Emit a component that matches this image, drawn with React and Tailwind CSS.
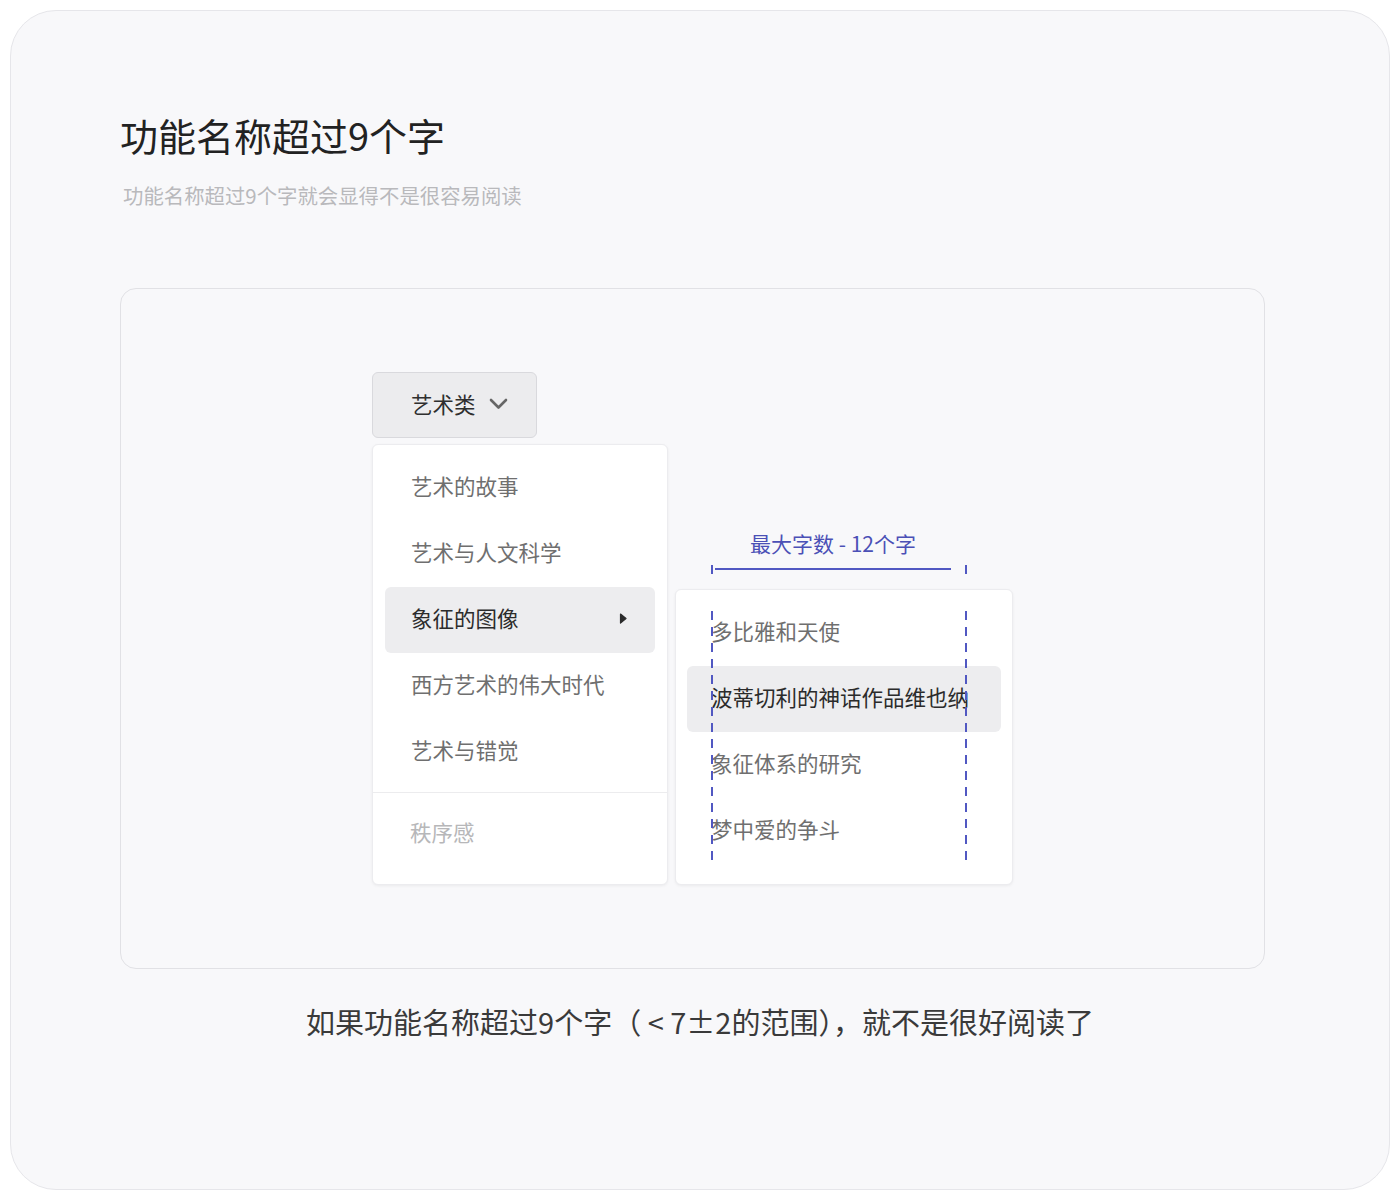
const firstMenu = ["艺术的故事", "艺术与人文科学", "象征的图像", "西方艺术的伟大时代", "艺术与错觉"];
const subMenu = ["多比雅和天使", "波蒂切利的神话作品维也纳", "象征体系的研究", "梦中爱的争斗"];

function DashedLine({ className, height }) {
  return (
    <svg className={className} width="4" height={height} viewBox={`0 0 4 ${height}`}>
      <line x1="2" y1="0" x2="2" y2={height} stroke="#5158c2" strokeWidth="2" strokeDasharray="9 7" />
    </svg>
  );
}

function MenuItem({ label, active, hasChildren }) {
  return (
    <div
      className={
        "flex h-[66px] items-center justify-between rounded-md pb-[3px] pl-[26px] pr-[28px] text-[21.5px] " +
        (active ? "bg-[#ededef] text-[#2b2b2b]" : "text-[#6f6f6f]")
      }
    >
      <span>{label}</span>
      {hasChildren && (
        <svg width="8" height="11" viewBox="0 0 8 11">
          <path d="M1.5 1 L7 5.5 L1.5 10 Z" fill="#2b2b2b" stroke="#2b2b2b" strokeLinejoin="round" strokeWidth="1.2" />
        </svg>
      )}
    </div>
  );
}

export default function App() {
  return (
    <div
      className="min-h-[1200px] bg-white p-[10px]"
      style={{ fontFamily: '"Noto Sans CJK SC", "Noto Sans", sans-serif' }}
    >
      <div className="flex h-[1180px] flex-col rounded-[46px] border border-[#e6e6ea] bg-[#f8f8fa] pl-[109px] pt-[101px]">
        <h1 className="text-[38px] leading-[46px] font-normal text-[#222222]">功能名称超过9个字</h1>
        <p className="mt-[23px] pl-[3px] text-[20.4px] leading-[28px] text-[#b9b9bc]">
          功能名称超过9个字就会显得不是很容易阅读
        </p>

        <div className="mt-[79px] h-[681px] w-[1145px] rounded-[16px] border border-[#e1e1e5] pl-[251px] pt-[83px]">
          <div className="flex items-start">
            <div className="flex flex-col">
              <button className="flex h-[66px] w-[165px] items-center rounded-md border border-[#d9d9dd] bg-[#ececee] pb-[2px] pl-[38px] text-[21.5px] text-[#2f2f2f]">
                <span>艺术类</span>
                <svg className="ml-[13px]" width="19" height="12" viewBox="0 0 19 12">
                  <polyline points="2,2 9.5,9.5 17,2" fill="none" stroke="#666666" strokeWidth="2.6" strokeLinecap="round" strokeLinejoin="round" />
                </svg>
              </button>

              <div className="mt-[6px] w-[296px] rounded-md border border-[#ececef] bg-white px-[12px] pt-[10px] pb-[17px] shadow-[0_1px_3px_rgba(0,0,0,0.06)]">
                {firstMenu.map((item, i) => (
                  <MenuItem key={item} label={item} active={i === 2} hasChildren={i === 2} />
                ))}
                <div className="-mx-[12px] mt-[7px] border-t border-[#ececee]" />
                <div className="mt-[8px] flex h-[66px] items-center pb-[3px] pl-[25px] text-[21.5px] text-[#b7b7b9]">秩序感</div>
              </div>
            </div>

            <div className="mt-[158px] ml-[7px] flex flex-col">
              <div className="relative h-[59px] w-[338px]">
                <div className="absolute left-[30px] -top-[1px] w-[256px] text-center text-[21px] leading-[28px] text-[#4b50b6]">
                  最大字数&nbsp;-&nbsp;12个字
                </div>
                <DashedLine className="absolute left-[35px] top-[35px]" height={10} />
                <DashedLine className="absolute left-[289px] top-[35px]" height={10} />
                <div className="absolute left-[40px] top-[38px] h-[2px] w-[236px] bg-[#5158c2]" />
              </div>

              <div className="relative w-[338px] rounded-md border border-[#ececef] bg-white px-[11px] pt-[10px] pb-[20px] shadow-[0_1px_3px_rgba(0,0,0,0.06)]">
                {subMenu.map((item, i) => (
                  <div
                    key={item}
                    className={
                      "flex h-[66px] items-center rounded-md pb-[3px] pl-[24px] text-[21.5px] " +
                      (i === 1 ? "bg-[#ededef] text-[#2b2b2b]" : "text-[#6f6f6f]")
                    }
                  >
                    {item}
                  </div>
                ))}
                <DashedLine className="absolute left-[34px] top-[21px]" height={250} />
                <DashedLine className="absolute left-[288px] top-[21px]" height={250} />
              </div>
            </div>
          </div>
        </div>

        <p className="-ml-[109px] mt-[32px] w-[1378px] text-center text-[29px] leading-[40px] text-[#3a3a3a]">
          如果功能名称超过9个字（ &lt; 7±2的范围），就不是很好阅读了
        </p>
      </div>
    </div>
  );
}
